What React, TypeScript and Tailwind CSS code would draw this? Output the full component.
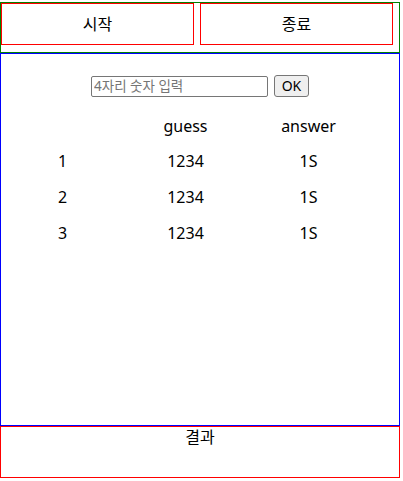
import React from "react";

const font = { fontFamily: '"Noto Sans", "Noto Sans CJK KR", sans-serif' };

export default function App() {
  const rows = [
    { n: 1, g: "1234", a: "1S" },
    { n: 2, g: "1234", a: "1S" },
    { n: 3, g: "1234", a: "1S" },
  ];
  return (
    <div className="w-[400px] bg-white text-black text-[16px] font-['Noto_Sans','Noto_Sans_CJK_KR',sans-serif]" style={font}>
      <div className="mt-[2px] h-[51px] border border-[#008000] flex items-start gap-[6px] px-0">
        <button className="w-[193px] h-[42px] border border-[#ff0000] flex items-center justify-center text-[16px]">
          시작
        </button>
        <button className="w-[193px] h-[42px] border border-[#ff0000] flex items-center justify-center text-[16px]">
          종료
        </button>
      </div>
      <div className="h-[373px] border border-[#0000ff]">
        <div className="mt-[21px] flex justify-center items-center gap-[6px]">
          <input
            className="w-[177px] h-[21px] border border-[#767676] rounded-[2px] px-[2px] text-[13.5px] placeholder:text-[#757575] outline-none"
            placeholder="4자리 숫자 입력"
          />
          <button className="w-[35px] h-[22px] border border-[#767676] bg-[#efefef] rounded-[3px] text-[14px] leading-none flex items-center justify-center">
            OK
          </button>
        </div>
        <div className="mt-[11px] w-[369px]">
          <div className="grid grid-cols-[123px_123px_123px] h-[35px] items-center text-center">
            <div></div>
            <div>guess</div>
            <div>answer</div>
          </div>
          {rows.map((r) => (
            <div key={r.n} className="grid grid-cols-[123px_123px_123px] h-[36px] items-center text-center">
              <div>{r.n}</div>
              <div>{r.g}</div>
              <div>{r.a}</div>
            </div>
          ))}
        </div>
      </div>
      <div className="h-[52px] border border-[#ff0000] text-center leading-[20px]">결과</div>
    </div>
  );
}
